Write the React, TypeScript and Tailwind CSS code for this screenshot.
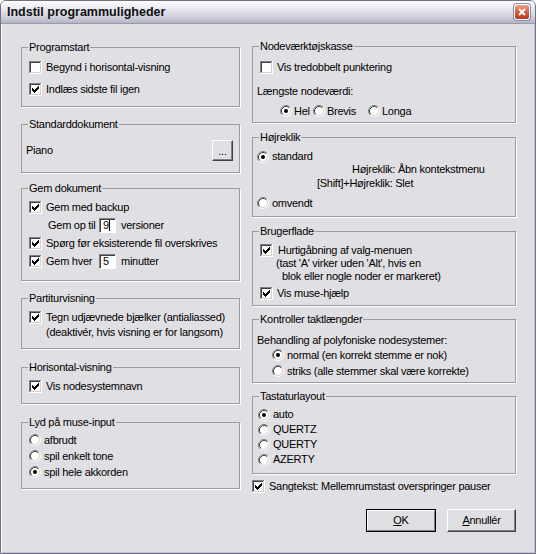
import React from 'react';

const checkCols = [
  [3, 5],
  [4, 6],
  [5, 7],
  [6, 6],
  [7, 5],
  [8, 4],
  [9, 3],
];

const CheckBox = ({ checked }: { checked?: boolean }) => (
  <svg width="13" height="13" viewBox="0 0 13 13" className="shrink-0">
    <rect x="0" y="0" width="13" height="13" fill="#ffffff" />
    <rect x="0" y="0" width="12" height="1" fill="#808080" />
    <rect x="0" y="0" width="1" height="12" fill="#808080" />
    <rect x="1" y="1" width="10" height="1" fill="#404040" />
    <rect x="1" y="1" width="1" height="10" fill="#404040" />
    <rect x="1" y="11" width="11" height="1" fill="#d4d0c8" />
    <rect x="11" y="1" width="1" height="11" fill="#d4d0c8" />
    {checked &&
      checkCols.map(([x, y]) => <rect key={x} x={x} y={y} width="1" height="3" fill="#000000" />)}
  </svg>
);

const Radio = ({ checked }: { checked?: boolean }) => (
  <svg width="12" height="12" viewBox="0 0 12 12" className="shrink-0">
    <circle cx="6" cy="6" r="5" fill="#ffffff" />
    <path d="M2.11 9.89 A5.5 5.5 0 0 1 9.89 2.11" fill="none" stroke="#808080" strokeWidth="1" />
    <path d="M9.89 2.11 A5.5 5.5 0 0 1 2.11 9.89" fill="none" stroke="#ffffff" strokeWidth="1" />
    <path d="M2.82 9.18 A4.5 4.5 0 0 1 9.18 2.82" fill="none" stroke="#404040" strokeWidth="1" />
    <path d="M9.18 2.82 A4.5 4.5 0 0 1 2.82 9.18" fill="none" stroke="#d4d0c8" strokeWidth="1" />
    {checked && <circle cx="6" cy="6" r="2" fill="#000000" />}
  </svg>
);

interface GroupProps {
  title: string;
  className?: string;
  innerClassName?: string;
  children: React.ReactNode;
}

// etched group box; padding goes on the inner div so the legend stays put
const Group = ({ title, className = '', innerClassName = '', children }: GroupProps) => (
  <fieldset className={`border border-[#9d9da1] shadow-[1px_1px_0_#ffffff] ${className}`}>
    <legend className="ml-[6px] px-[1px] leading-[12px]">{title}</legend>
    <div className={innerClassName}>{children}</div>
  </fieldset>
);

const Check = ({ checked, label, className = '' }: { checked?: boolean; label: string; className?: string }) => (
  <div className={`flex items-center ${className}`}>
    <CheckBox checked={checked} />
    <span className="ml-[4px] whitespace-nowrap">{label}</span>
  </div>
);

const Option = ({
  checked,
  label,
  className = '',
  gap = 'ml-[3px]',
}: {
  checked?: boolean;
  label: string;
  className?: string;
  gap?: string;
}) => (
  <div className={`flex items-center ${className}`}>
    <Radio checked={checked} />
    <span className={`${gap} whitespace-nowrap`}>{label}</span>
  </div>
);

const Edit = ({ value }: { value: string }) => (
  <div className="w-[17px] h-[15px] shrink-0 bg-white border border-t-[#808080] border-l-[#808080] border-b-white border-r-white shadow-[inset_1px_1px_0_#404040] flex items-center pl-[3px] leading-none">
    {value}
  </div>
);

export default function App() {
  return (
    <div className="w-[536px] h-[554px] bg-white font-['Liberation_Sans',Arial,sans-serif] text-[11px] tracking-[-0.27px] text-black">
      <div className="w-full h-full flex flex-col rounded-t-[6px] overflow-hidden border border-[#6f6f86] bg-[#e0dfe3]">
        {/* title bar */}
        <div className="h-[23px] shrink-0 flex items-center justify-between pl-[6px] pr-[5px] border-b border-[#9a9aac] bg-[linear-gradient(to_bottom,#fdfdfe_0%,#ececf2_30%,#d2d2de_70%,#b4b4c6_100%)]">
          <span className="font-bold text-[12.5px] tracking-normal text-[#101010]">Indstil programmuligheder</span>
          <div className="w-[16px] h-[16px] rounded-[3px] border border-white bg-[linear-gradient(to_bottom,#eba48c,#d25a3a_55%,#b8381c)] flex items-center justify-center shadow-[0_0_0_1px_#8a8aa0]">
            <svg width="8" height="8" viewBox="0 0 8 8">
              <path d="M1 1 L7 7 M7 1 L1 7" stroke="#ffffff" strokeWidth="1.8" />
            </svg>
          </div>
        </div>

        {/* body */}
        <div className="flex-1 flex items-start gap-[12px] pl-[20px] pt-[17px] shadow-[inset_1px_0_0_#ffffff,inset_-1px_-1px_0_#c6c6d2]">
          {/* left column */}
          <div className="w-[219px] flex flex-col">
            <Group title="Programstart" innerClassName="pt-[3px] pb-[6px] pl-[7px]">
              <Check label="Begynd i horisontal-visning" className="h-[22px]" />
              <Check checked label="Indlæs sidste fil igen" className="h-[22px]" />
            </Group>

            <Group title="Standarddokument" className="mt-[11px]" innerClassName="pt-[9px] pb-[11px] pl-[4px] pr-[6px]">
              <div className="h-[22px] flex items-center justify-between">
                <span>Piano</span>
                <div className="w-[21px] h-[21px] border border-t-white border-l-white border-r-[#404040] border-b-[#404040] shadow-[inset_-1px_-1px_0_#808080] flex items-end justify-center pb-[3px] leading-none">
                  ...
                </div>
              </div>
            </Group>

            <Group title="Gem dokument" className="mt-[9px]" innerClassName="pt-[4px] pb-[10px] pl-[7px]">
              <Check checked label="Gem med backup" className="h-[18px]" />
              <div className="h-[18px] flex items-center">
                <span className="ml-[19px] w-[51px]">Gem op til</span>
                <div className="relative">
                  <Edit value="9" />
                  <div className="absolute left-[10px] top-[2px] w-[1px] h-[11px] bg-black" />
                </div>
                <span className="ml-[5px]">versioner</span>
              </div>
              <Check checked label="Spørg før eksisterende fil overskrives" className="h-[18px]" />
              <div className="h-[18px] flex items-center">
                <CheckBox checked />
                <span className="ml-[4px] w-[53px]">Gem hver</span>
                <Edit value="5" />
                <span className="ml-[5px]">minutter</span>
              </div>
            </Group>

            <Group title="Partiturvisning" className="mt-[11px]" innerClassName="pt-[6px] pb-[8px] pl-[7px]">
              <div className="flex items-start">
                <div className="mt-[1px]">
                  <CheckBox checked />
                </div>
                <div className="ml-[4px] leading-[15px] whitespace-nowrap">
                  <div>Tegn udjævnede bjælker (antialiassed)</div>
                  <div>(deaktivér, hvis visning er for langsom)</div>
                </div>
              </div>
            </Group>

            <Group title="Horisontal-visning" className="mt-[12px]" innerClassName="pt-[4px] pb-[8px] pl-[7px]">
              <Check checked label="Vis nodesystemnavn" className="h-[18px]" />
            </Group>

            <Group title="Lyd på muse-input" className="mt-[12px]" innerClassName="pt-[4px] pb-[8px] pl-[7px]">
              <Option label="afbrudt" className="h-[16px]" />
              <Option label="spil enkelt tone" className="h-[16px]" />
              <Option checked label="spil hele akkorden" className="h-[16px]" />
            </Group>
          </div>

          {/* right column */}
          <div className="w-[264px] flex flex-col -mt-[1px]">
            <Group title="Nodeværktøjskasse" innerClassName="pt-[4px] pb-[3px] pl-[7px]">
              <Check label="Vis tredobbelt punktering" className="h-[22px]" />
              <div className="mt-[5px] h-[16px] flex items-center -ml-[3px]">Længste nodeværdi:</div>
              <div className="mt-[4px] h-[16px] flex items-center ml-[20px]">
                <Option checked label="Hel" gap="ml-[2px]" className="w-[33px]" />
                <Option label="Brevis" gap="ml-[2px]" className="w-[55px]" />
                <Option label="Longa" gap="ml-[2px]" />
              </div>
            </Group>

            <Group title="Højreklik" className="mt-[8px]" innerClassName="pt-[7px] pb-[5px] pl-[4px]">
              <Option checked label="standard" className="h-[13px]" />
              <div className="h-[13px] flex items-center ml-[95px]">Højreklik: Åbn kontekstmenu</div>
              <div className="h-[15px] flex items-center ml-[60px]">[Shift]+Højreklik: Slet</div>
              <Option label="omvendt" className="mt-[4px] h-[16px]" />
            </Group>

            <Group title="Brugerflade" className="mt-[8px]" innerClassName="pt-[7px] pb-[4px] pl-[7px]">
              <div className="flex items-start">
                <CheckBox checked />
                <div className="ml-[5px] leading-[13px] whitespace-nowrap">
                  <div>Hurtigåbning af valg-menuen</div>
                  <div className="-ml-[2px]">(tast 'A' virker uden 'Alt', hvis en</div>
                  <div className="ml-[4px]">blok eller nogle noder er markeret)</div>
                </div>
              </div>
              <Check checked label="Vis muse-hjælp" className="mt-[2px] h-[16px]" />
            </Group>

            <Group title="Kontroller taktlængder" className="mt-[7px]" innerClassName="pt-[8px] pb-[3px] pl-[4px]">
              <div className="h-[14px] flex items-center">Behandling af polyfoniske nodesystemer:</div>
              <Option checked label="normal (en korrekt stemme er nok)" className="h-[16px] ml-[15px]" />
              <Option label="striks (alle stemmer skal være korrekte)" className="h-[16px] ml-[15px]" />
            </Group>

            <Group title="Tastaturlayout" className="mt-[7px]" innerClassName="pt-[5px] pb-[6px] pl-[5px]">
              <Option checked label="auto" className="h-[15px]" />
              <Option label="QUERTZ" className="h-[15px]" />
              <Option label="QUERTY" className="h-[15px]" />
              <Option label="AZERTY" className="h-[15px]" />
            </Group>

            <Check checked label="Sangtekst: Mellemrumstast overspringer pauser" className="mt-[4px] h-[16px]" />

            <div className="mt-[15px] flex justify-end gap-[11px]">
              <div className="w-[70px] h-[23px] border border-black">
                <div className="w-full h-full border border-t-white border-l-white border-r-[#808080] border-b-[#808080] flex items-center justify-center">
                  <span>
                    <span className="underline">O</span>K
                  </span>
                </div>
              </div>
              <div className="w-[69px] h-[23px] border border-t-white border-l-white border-r-[#404040] border-b-[#404040] shadow-[inset_-1px_-1px_0_#808080] flex items-center justify-center">
                <span>
                  <span className="underline">A</span>nnullér
                </span>
              </div>
            </div>
          </div>
        </div>
      </div>
    </div>
  );
}
